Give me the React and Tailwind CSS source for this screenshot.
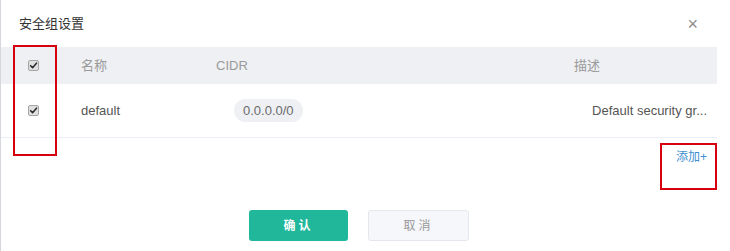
import React from 'react';

const font = { fontFamily: '"Liberation Sans", Arial, "Noto Sans CJK SC", sans-serif' };

const Check = () => (
  <span className="flex h-[11px] w-[11px] items-center justify-center rounded-[2px] border border-[#a5a5a5] bg-[#e0e0e0]">
    <svg viewBox="0 0 10 10" className="h-[9px] w-[9px]">
      <path d="M1.8 5.2 L4 7.4 L8.3 2.4" fill="none" stroke="#2a2a2a" strokeWidth="1.7" strokeLinecap="round" strokeLinejoin="round" />
    </svg>
  </span>
);

const App = () => {
  return (
    <div className="relative h-[251px] w-[730px] overflow-hidden border-l border-[#d4d7dc] bg-white text-[13px]" style={font}>
      {/* title bar */}
      <div className="flex h-[47px] items-center justify-between pl-[18px] pr-[32px]">
        <span className="text-[13px] text-[#333]">安全组设置</span>
        <span className="text-[18px] leading-none text-[#8c8c8c]">×</span>
      </div>

      <div className="mr-[13px]">
        {/* header */}
        <div className="flex h-[37px] items-center bg-[#eef0f3] text-[#9a9a9a]">
          <div className="flex w-[65px] justify-center"><Check /></div>
          <div className="w-[150px] pl-[15px]">名称</div>
          <div className="w-[358px]">CIDR</div>
          <div className="flex-1">描述</div>
        </div>

        {/* row */}
        <div className="flex h-[54px] items-center border-b border-[#ebeef5] text-[#555]">
          <div className="flex w-[65px] justify-center"><Check /></div>
          <div className="w-[150px] pl-[15px]">default</div>
          <div className="w-[358px] pl-[18px]">
            <span className="inline-flex h-[23px] items-center rounded-full bg-[#eef0f3] px-[9px] text-[#6b6b6b]">0.0.0.0/0</span>
          </div>
          <div className="flex-1 pr-[10px] text-right">Default security gr...</div>
        </div>

        {/* add */}
        <div className="flex h-[38px] items-center justify-end pr-[10px]">
          <span className="text-[12px] text-[#3d8fd1]">添加+</span>
        </div>

        {/* buttons */}
        <div className="mt-[34px] flex justify-center gap-[20px]">
          <button className="h-[31px] w-[99px] rounded-[3px] bg-[#20b79b] text-[12px] font-bold tracking-[3px] text-white">确认</button>
          <button className="h-[31px] w-[101px] rounded-[3px] border border-[#e4e7ed] bg-[#f5f7fa] text-[12px] tracking-[3px] text-[#999]">取消</button>
        </div>
      </div>

      {/* annotation boxes */}
      <div className="absolute left-[12px] top-[45px] h-[111px] w-[44px] border-2 border-[#d7000f]" />
      <div className="absolute left-[659px] top-[143px] h-[47px] w-[57px] border-2 border-[#d7000f]" />
    </div>
  );
};

export default App;
